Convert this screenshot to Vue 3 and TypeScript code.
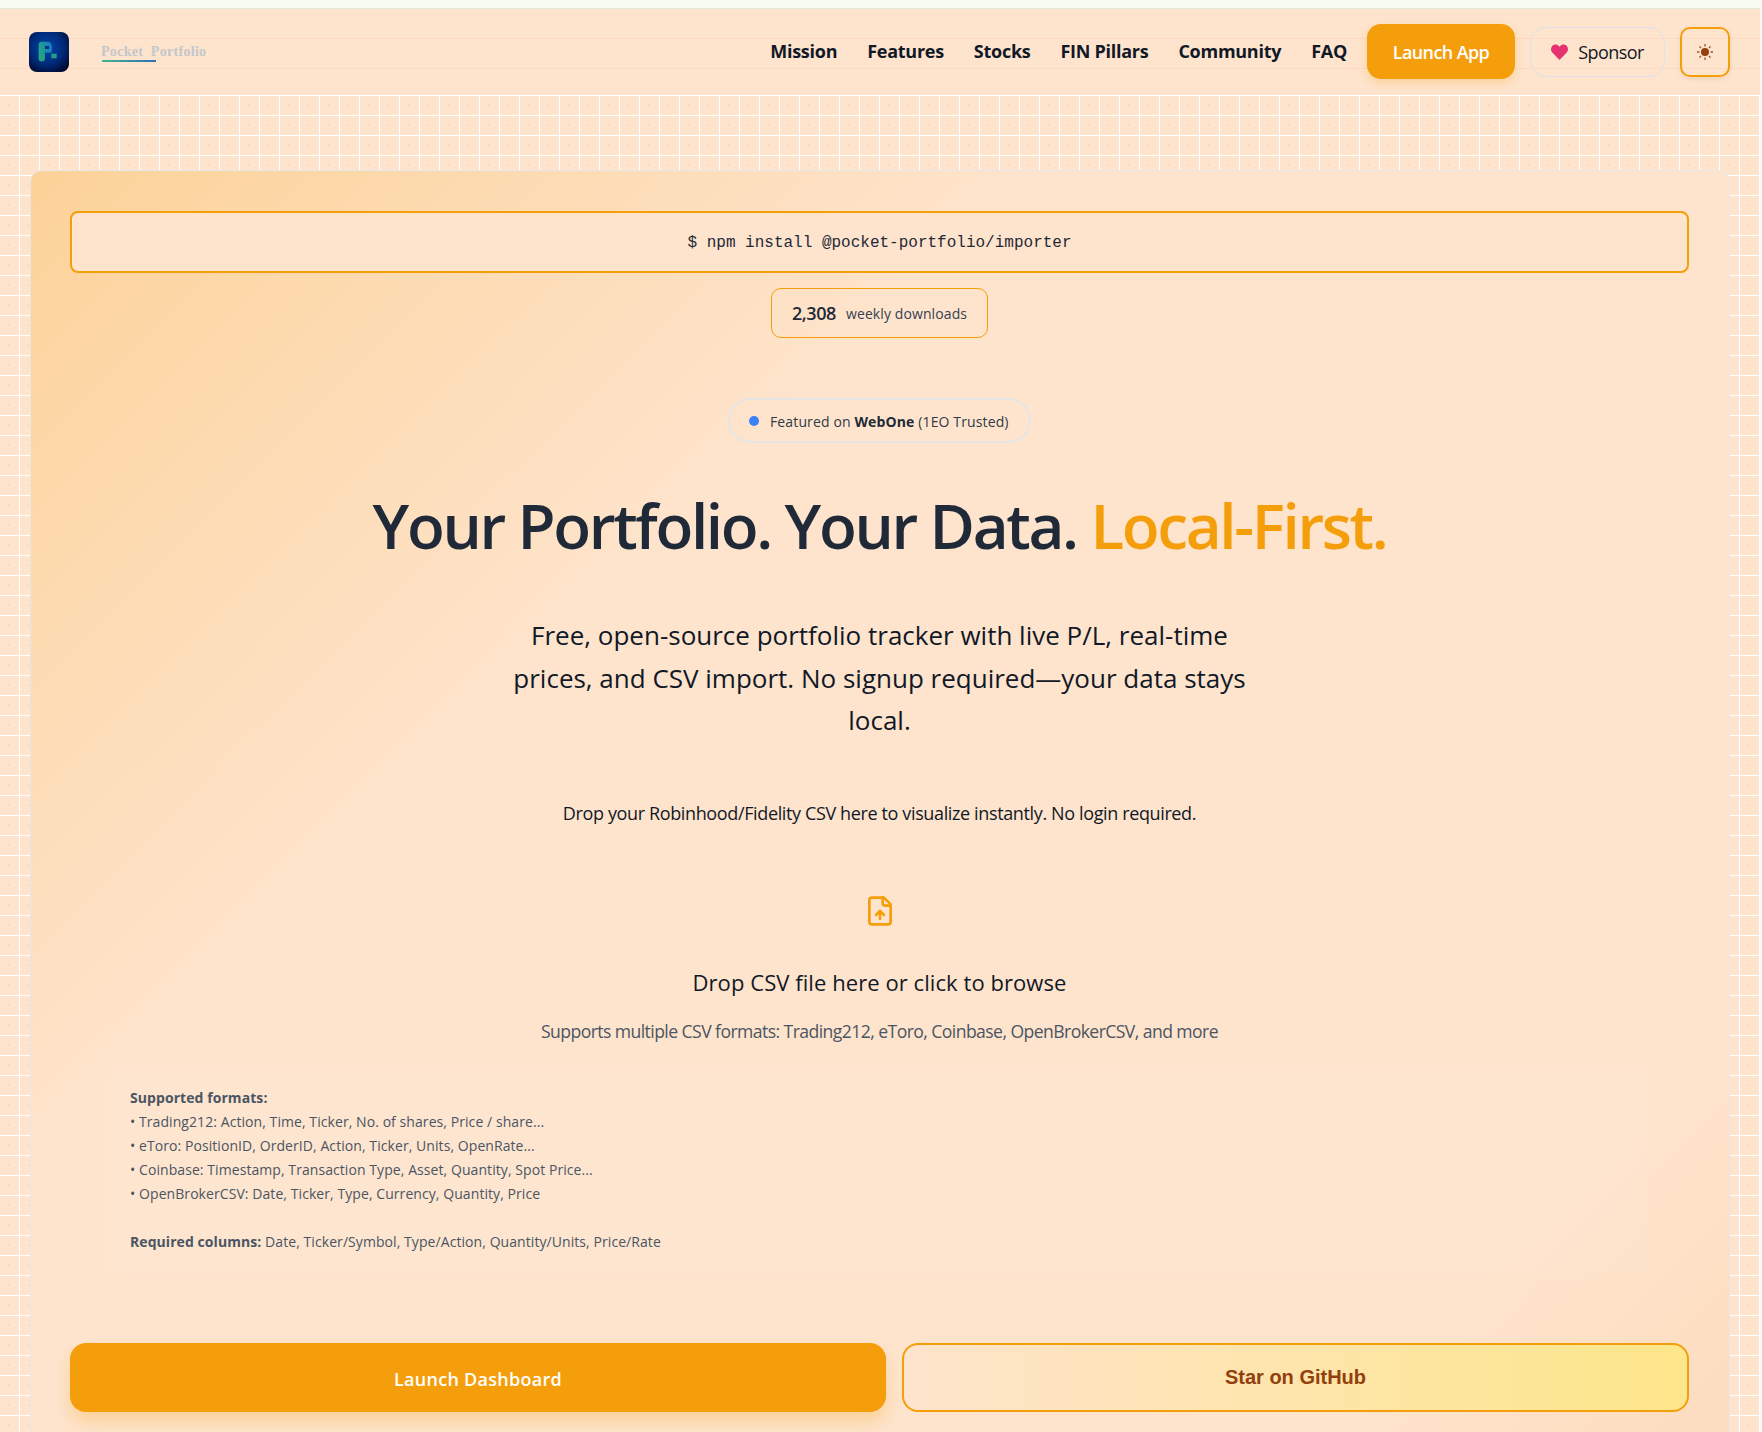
<script setup lang="ts">
const navLinks: string[] = ['Mission', 'Features', 'Stocks', 'FIN Pillars', 'Community', 'FAQ']

const formatLines: string[] = [
  '• Trading212: Action, Time, Ticker, No. of shares, Price / share...',
  '• eToro: PositionID, OrderID, Action, Ticker, Units, OpenRate...',
  '• Coinbase: Timestamp, Transaction Type, Asset, Quantity, Spot Price...',
  '• OpenBrokerCSV: Date, Ticker, Type, Currency, Quantity, Price',
]
</script>

<template>
  <div class="page">
    <header class="topbar">
      <div class="brand">
        <svg class="logo" width="40" height="40" viewBox="0 0 40 40">
          <defs>
            <radialGradient id="logoBg" cx="45%" cy="40%" r="75%">
              <stop offset="0%" stop-color="#0046a8" />
              <stop offset="55%" stop-color="#002a78" />
              <stop offset="100%" stop-color="#00021f" />
            </radialGradient>
            <linearGradient id="logoP" x1="0" y1="0.6" x2="1" y2="0.2">
              <stop offset="0%" stop-color="#22a87c" />
              <stop offset="100%" stop-color="#1a78c8" />
            </linearGradient>
          </defs>
          <rect width="40" height="40" rx="8" fill="url(#logoBg)" />
          <path d="M9.600 13a3.300 3.300 0 0 1 3.300-3.300H18.500a4.300 4.300 0 0 1 4.300 4.300V20.500H16v5.800a3.200 3.200 0 0 1-6.400 0Z" fill="url(#logoP)" />
          <rect x="16" y="14" width="4" height="3" fill="#00337f" />
          <rect x="22.300" y="21.700" width="5.400" height="4.600" fill="#23a08c" />
        </svg>
        <div class="brand-name">Pocket&nbsp; Portfolio</div>
      </div>
      <nav class="nav">
        <a v-for="link in navLinks" :key="link" class="nav-link">{{ link }}</a>
      </nav>
      <button class="launch-app">Launch App</button>
      <button class="sponsor">
        <svg width="17" height="16" viewBox="0 0 17 16">
          <path d="M8.500 16 1.300 8.600C-.400 6.800-.400 3.900 1.200 2 2.900 0 5.900 0 7.600 1.800l.9 1 .9-1C11.100 0 14.100 0 15.800 2c1.600 1.900 1.600 4.800-.1 6.600Z" fill="#e6306f" />
        </svg>
        <span>Sponsor</span>
      </button>
      <button class="theme-toggle" aria-label="Toggle theme">
        <svg width="18" height="18" viewBox="0 0 18 18" stroke="#a0522d" stroke-width="1.300" stroke-linecap="butt">
          <circle cx="9" cy="9" r="4" fill="#92400e" stroke="none" />
          <path d="M9 1v2.400M9 14.600V17M1 9h2.400M14.600 9H17M3.400 3.400 5 5M13 13l1.600 1.600M3.400 14.600 5 13M13 5l1.600-1.600" />
        </svg>
      </button>
    </header>

    <main class="main">
      <section class="card">
        <div class="install">$ npm install @pocket-portfolio/importer</div>

        <div class="downloads">
          <strong>2,308</strong>
          <span>weekly downloads</span>
        </div>

        <div class="featured">
          <i class="dot"></i>
          <span>Featured on <b>WebOne</b> (1EO Trusted)</span>
        </div>

        <h1 class="title">Your Portfolio. Your Data. <em>Local-First.</em></h1>

        <p class="subtitle">
          Free, open-source portfolio tracker with live P/L, real-time prices, and CSV import. No signup required—your data stays local.
        </p>

        <p class="drop-hint">Drop your Robinhood/Fidelity CSV here to visualize instantly. No login required.</p>

        <svg class="file-icon" width="32" height="32" viewBox="0 0 24 24" fill="none" stroke="#f59e0b" stroke-width="2" stroke-linecap="round" stroke-linejoin="round">
          <path d="M15 2H6a2 2 0 0 0-2 2v16a2 2 0 0 0 2 2h12a2 2 0 0 0 2-2V7Z" />
          <path d="M14 2v4a2 2 0 0 0 2 2h4" />
          <path d="M12 12v6" />
          <path d="m15 15-3-3-3 3" />
        </svg>

        <h2 class="drop-title">Drop CSV file here or click to browse</h2>
        <p class="drop-sub">Supports multiple CSV formats: Trading212, eToro, Coinbase, OpenBrokerCSV, and more</p>

        <div class="formats">
          <div class="formats-head">Supported formats:</div>
          <div v-for="line in formatLines" :key="line">{{ line }}</div>
          <div class="formats-req"><b>Required columns:</b> Date, Ticker/Symbol, Type/Action, Quantity/Units, Price/Rate</div>
        </div>

        <div class="cta-row">
          <button class="cta-primary">Launch Dashboard</button>
          <button class="cta-star">Star on GitHub</button>
        </div>
      </section>
    </main>
  </div>
</template>

<style>
html,
body {
  background: #f8fbf0;
}
</style>

<style scoped>
.page {
  width: 1760px;
  height: 1432px;
  overflow: hidden;
  box-sizing: border-box;
  padding-top: 8px;
  font-family: "Open Sans", "Noto Sans", sans-serif;
  color: #1f2937;
}

.topbar {
  height: 87px;
  box-sizing: border-box;
  display: flex;
  align-items: center;
  padding: 0 30px 1px 29px;
  border-top: 1px solid #e3e8dc;
  background:
    linear-gradient(#ffd9c4, #ffd9c4) 0 29px / 100% 1px no-repeat,
    linear-gradient(#ffd9c4, #ffd9c4) 0 59px / 100% 1px no-repeat,
    linear-gradient(#ffe0ca, #ffe0ca) 0 5px / 100% 1px no-repeat,
    #fee4cc;
}

.brand {
  display: flex;
  align-items: center;
  gap: 32px;
}

.logo {
  display: block;
}

.brand-name {
  position: relative;
  font-family: "Liberation Serif", serif;
  font-size: 14px;
  font-weight: 700;
  letter-spacing: 0.3px;
  color: #c3c7cd;
}

.brand-name::after {
  content: "";
  position: absolute;
  left: 1px;
  bottom: -2px;
  width: 54px;
  height: 2px;
  background: linear-gradient(90deg, #3fb58f, #2f6fb5);
}

.nav {
  margin-left: auto;
  padding-bottom: 1px;
  display: flex;
  gap: 30px;
}

.nav-link {
  font-size: 18px;
  font-weight: 700;
  letter-spacing: -0.27px;
  color: #111827;
}

button {
  font-family: inherit;
  cursor: pointer;
}

.launch-app {
  margin-left: 20px;
  width: 148px;
  height: 55px;
  border: none;
  border-radius: 14px;
  background: #f59e0b;
  color: #fff;
  font-size: 18px;
  font-weight: 600;
  letter-spacing: -0.6px;
  box-shadow: 0 4px 8px rgba(245, 158, 11, 0.25);
}

.sponsor {
  margin-left: 15px;
  width: 135px;
  height: 50px;
  display: flex;
  align-items: center;
  justify-content: center;
  gap: 10px;
  border: 1px solid #dde2ea;
  border-radius: 16px;
  background: transparent;
  color: #111827;
  font-size: 18px;
  font-weight: 500;
  letter-spacing: -0.6px;
}

.theme-toggle {
  margin-left: 15px;
  width: 50px;
  height: 50px;
  display: flex;
  align-items: center;
  justify-content: center;
  padding: 0;
  border: 2px solid #f59e0b;
  border-radius: 10px;
  background: transparent;
  box-shadow: 0 2px 5px rgba(0, 0, 0, 0.08);
}

.main {
  height: 1337px;
  box-sizing: border-box;
  padding: 75px 30px 0;
  background-color: #fee4cc;
  background-image:
    linear-gradient(#fff 1px, transparent 1px),
    linear-gradient(90deg, #fff 1px, transparent 1px),
    radial-gradient(circle at 10px 10px, #ffd6c0 1px, transparent 1.600px);
  background-size: 20px 20px;
  background-position: 0 0, 19px 0, -1px 0;
}

.card {
  height: 1320px;
  box-sizing: border-box;
  padding: 40px 40px 0 39px;
  border: 1px solid #e5e7eb;
  border-bottom: none;
  border-radius: 12px 12px 0 0;
  background: linear-gradient(135deg, #fcd298 0%, #fee4cc 33%, #fee4cc 85%, #fddbbd 100%) border-box;
  display: flex;
  flex-direction: column;
  align-items: center;
  text-align: center;
}

.install {
  align-self: stretch;
  height: 62px;
  box-sizing: border-box;
  padding-top: 2px;
  display: flex;
  align-items: center;
  justify-content: center;
  border: 2px solid #f59e0b;
  border-radius: 8px;
  background: #fee4cc;
  font-family: "Liberation Mono", monospace;
  font-size: 16px;
  color: #1f2937;
}

.downloads {
  margin-top: 15px;
  width: 217px;
  height: 50px;
  box-sizing: border-box;
  display: flex;
  align-items: center;
  justify-content: center;
  gap: 10px;
  border: 1px solid #f59e0b;
  border-radius: 10px;
  font-size: 14px;
  letter-spacing: 0.1px;
  color: #374151;
}

.downloads strong {
  font-size: 18px;
  font-weight: 600;
  letter-spacing: -0.4px;
  color: #1f2937;
}

.featured {
  margin-top: 60px;
  width: 303px;
  height: 45px;
  box-sizing: border-box;
  display: flex;
  align-items: center;
  gap: 11px;
  padding: 1px 0 0 19px;
  border: 2px solid #e6e5e6;
  border-radius: 23px;
  font-size: 14px;
  letter-spacing: 0.13px;
  color: #2f3a4a;
  white-space: nowrap;
}

.featured b {
  font-weight: 700;
  color: #1f2937;
}

.dot {
  width: 10px;
  height: 10px;
  border-radius: 50%;
  background: #3b82f6;
}

.title {
  margin: 47px 0 0;
  font-size: 62px;
  line-height: 70.400px;
  font-weight: 600;
  letter-spacing: -2.36px;
  color: #1f2937;
  white-space: nowrap;
}

.title em {
  font-style: normal;
  color: #f59e0b;
}

.subtitle {
  margin: 54px 0 0;
  width: 745px;
  font-size: 26px;
  line-height: 42.500px;
  font-weight: 500;
  letter-spacing: 0;
  color: #111827;
}

.drop-hint {
  margin: 57px 0 0;
  font-size: 18px;
  line-height: 28px;
  font-weight: 500;
  letter-spacing: -0.37px;
  color: #111827;
}

.file-icon {
  margin-top: 68px;
  display: block;
}

.drop-title {
  margin: 39px 0 0;
  font-size: 22px;
  line-height: 32px;
  font-weight: 500;
  letter-spacing: 0.07px;
  color: #111827;
}

.drop-sub {
  margin: 19px 0 0;
  font-size: 17.600px;
  line-height: 28px;
  letter-spacing: -0.57px;
  color: #4b5563;
}

.formats {
  align-self: flex-start;
  margin: 21px 0 0 39px;
  width: 1538px;
  height: 208px;
  box-sizing: border-box;
  padding: 20px 21px;
  border-radius: 8px;
  background: rgba(255, 255, 255, 0.06);
  font-size: 14px;
  line-height: 24px;
  letter-spacing: 0.07px;
  color: #4b5563;
  text-align: left;
}

.formats-head,
.formats b {
  font-weight: 700;
}

.formats-req {
  margin-top: 24px;
}

.cta-row {
  align-self: stretch;
  margin-top: 69px;
  display: grid;
  grid-template-columns: 816px 787px;
  gap: 16px;
}

.cta-row button {
  height: 69px;
  border-radius: 16px;
}

.cta-primary {
  border: none;
  background: #f59e0b;
  color: #fff;
  font-size: 18px;
  font-weight: 600;
  letter-spacing: 0.28px;
  padding-top: 4px;
  box-shadow: 0 10px 15px rgba(245, 158, 11, 0.25);
}

.cta-star {
  border: 2px solid #f59e0b;
  background: linear-gradient(90deg, #fee4cc, #fde68a);
  color: #92400e;
  font-family: "Liberation Sans", sans-serif;
  font-size: 20px;
  font-weight: 700;
}
</style>
